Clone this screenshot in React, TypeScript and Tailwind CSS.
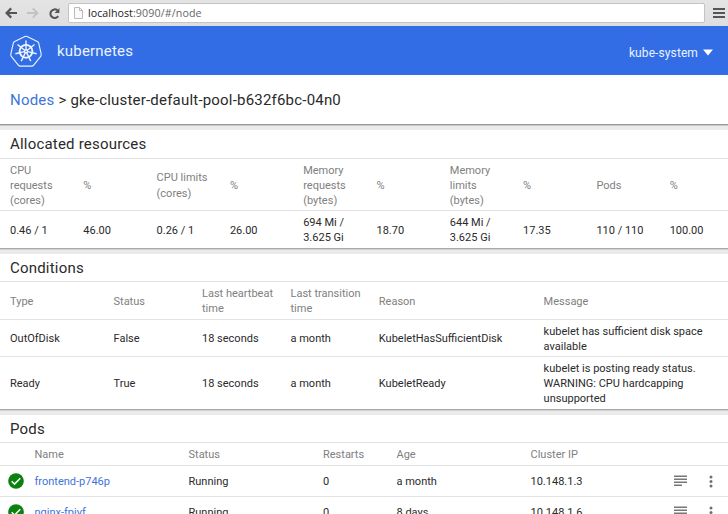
import React from 'react';

const resources = [
  { label: 'CPU requests (cores)', value: '0.46 / 1' },
  { label: '%', value: '46.00' },
  { label: 'CPU limits (cores)', value: '0.26 / 1' },
  { label: '%', value: '26.00' },
  { label: 'Memory requests (bytes)', value: '694 Mi / 3.625 Gi' },
  { label: '%', value: '18.70' },
  { label: 'Memory limits (bytes)', value: '644 Mi / 3.625 Gi' },
  { label: '%', value: '17.35' },
  { label: 'Pods', value: '110 / 110' },
  { label: '%', value: '100.00' },
];

const conditionHeads = ['Type', 'Status', 'Last heartbeat time', 'Last transition time', 'Reason', 'Message'];

const conditions = [
  ['OutOfDisk', 'False', '18 seconds', 'a month', 'KubeletHasSufficientDisk', 'kubelet has sufficient disk space available'],
  ['Ready', 'True', '18 seconds', 'a month', 'KubeletReady', 'kubelet is posting ready status. WARNING: CPU hardcapping unsupported'],
];

const pods = [
  { name: 'frontend-p746p', status: 'Running', restarts: 0, age: 'a month', ip: '10.148.1.3' },
  { name: 'nginx-fpivf', status: 'Running', restarts: 0, age: '8 days', ip: '10.148.1.6' },
];

const resourceGrid = 'grid grid-cols-[repeat(10,73.3px)] items-center pl-[10px]';
const conditionGrid = 'grid grid-cols-[103.5px_88.5px_88.5px_88.3px_164.8px_184.4px] items-center pt-[1.5px] pl-[10px]';
const podGrid = 'grid grid-cols-[34.5px_154px_134.5px_73.5px_134px_143px_1fr] items-center pt-[2px]';
const line = 'border-b border-[#e2e2e2]';

function BrowserBar() {
  return (
    <div className="flex h-[26px] items-center bg-gradient-to-b from-[#e4e4e4] to-[#dedede]">
      <svg className="ml-[5px] h-[12px] w-[13px]" viewBox="0 0 13 12" fill="none" stroke="#555" strokeWidth="2.2">
        <path d="M12 6H2M6.2 1.4 1.6 6l4.6 4.6" />
      </svg>
      <svg className="ml-[8px] h-[12px] w-[13px]" viewBox="0 0 13 12" fill="none" stroke="#c2c2c2" strokeWidth="2">
        <path d="M1 6h10M6.8 1.4 11.4 6l-4.6 4.6" />
      </svg>
      <svg className="ml-[9px] h-[13px] w-[13px]" viewBox="0 0 13 13">
        <path d="M10.2 9.2A4.3 4.3 0 1 1 9.4 3.3" fill="none" stroke="#555" strokeWidth="2" />
        <path d="M11.4 1v5H6.6z" fill="#555" />
      </svg>
      <div className="ml-[7px] flex h-[20px] w-[637px] items-center rounded-[2px] border border-[#c4c4c4] bg-white">
        <svg className="ml-[5px] h-[12px] w-[9px]" viewBox="0 0 9 12" fill="#fafafa" stroke="#bbb">
          <path d="M.5.5h5l3 3v8h-8zM5.5.5v3h3" />
        </svg>
        <span className="ml-[5px] pt-[2px] font-['Open_Sans',sans-serif] text-[10.7px] tracking-[0.1px] text-[#666]">
          <span className="tracking-[0.02px] text-[#222]">localhost</span>:9090/#/node
        </span>
      </div>
      <div className="ml-[8px] flex w-[12px] flex-col gap-[2px]">
        <i className="h-[2px] bg-[#555]" />
        <i className="h-[2px] bg-[#555]" />
        <i className="h-[2px] bg-[#555]" />
      </div>
    </div>
  );
}

function KubernetesLogo() {
  const angles = [0, 51.43, 102.86, 154.29, 205.71, 257.14, 308.57];
  return (
    <svg className="ml-[9px] h-[34px] w-[34px]" viewBox="0 0 34 34" fill="none" stroke="#eef5ff">
      <path d="M15.9 1.5Q17 1 18.1 1.5L28.3 6.4Q29.4 7 29.7 8.1L32.2 19.2Q32.4 20.4 31.7 21.3L24.7 30.1Q23.9 31.1 22.7 31.1H11.3Q10.1 31.1 9.3 30.1L2.3 21.3Q1.6 20.4 1.8 19.2L4.3 8.1Q4.6 7 5.7 6.4Z" strokeWidth="1.1" transform="translate(0 1)" />
      <circle cx="17" cy="17.3" r="6.4" strokeWidth="1.9" />
      <circle cx="17" cy="17.3" r="1.5" strokeWidth="1.4" />
      {angles.map((a) => (
        <path key={a} d="M17 15.6V6.4" strokeWidth="1.4" transform={`rotate(${a} 17 17.3)`} />
      ))}
    </svg>
  );
}

function Section({ title, first, children }: { title: string; first?: boolean; children: React.ReactNode }) {
  return (
    <section className="mt-[5px] border-b-[1.5px] border-[#aaa] bg-white shadow-[0_1px_0_#d2d2d2]">
      <h2 className={`flex items-center pt-[2px] pl-[10px] text-[15px] tracking-[0.2px] ${first ? 'h-[29px]' : 'h-[28px]'} ${line}`}>{title}</h2>
      {children}
    </section>
  );
}

export default function App() {
  return (
    <div className="h-[514px] w-[728px] overflow-hidden bg-[#ebebeb] font-[Roboto,sans-serif] text-[11px] leading-[15.2px] text-[#2a2a2a]">
      <BrowserBar />
      <header className="flex h-[49px] items-center bg-[#326de6] text-[#eaf3ff]">
        <KubernetesLogo />
        <span className="ml-[14px] pt-[2px] text-[15px] tracking-[0.2px]">kubernetes</span>
        <div className="mt-[5px] ml-auto mr-[15px] flex items-center gap-[5px] text-[12px] tracking-[0.1px]">
          <span className="pt-[2px]">kube-system</span>
          <svg className="h-[7px] w-[10px]" viewBox="0 0 10 7" fill="#fff"><path d="M0 .5h10L5 6.5z" /></svg>
        </div>
      </header>
      <div className="flex h-[50px] items-center gap-[4px] border-b border-[#999] bg-white pt-[2px] pl-[10px] text-[15px] tracking-[0.2px] shadow-[0_1px_0_#c8c8c8]">
        <a className="text-[#3d74d9]">Nodes</a>
        <span>&gt; gke-cluster-default-pool-b632f6bc-04n0</span>
      </div>

      <Section title="Allocated resources" first>
        <div className={`${resourceGrid} h-[52px] pt-[2.4px] text-[#808080] ${line}`}>
          {resources.map((r, i) => <span key={i} className="pr-[16px]">{r.label}</span>)}
        </div>
        <div className={`${resourceGrid} h-[37px] pt-[1.5px]`}>
          {resources.map((r, i) => <span key={i} className="pr-[16px]">{r.value}</span>)}
        </div>
      </Section>

      <Section title="Conditions">
        <div className={`${conditionGrid} h-[38px] text-[#808080] ${line}`}>
          {conditionHeads.map((h) => <span key={h} className="pr-[14px]">{h}</span>)}
        </div>
        <div className={`${conditionGrid} h-[37px] ${line}`}>
          {conditions[0].map((c, i) => <span key={i} className="pr-[14px]">{c}</span>)}
        </div>
        <div className={`${conditionGrid} h-[52px]`}>
          {conditions[1].map((c, i) => <span key={i} className="pr-[14px]">{c}</span>)}
        </div>
      </Section>

      <Section title="Pods">
        <div className={`${podGrid} h-[23px] text-[#808080] ${line}`}>
          <span />
          <span>Name</span>
          <span>Status</span>
          <span>Restarts</span>
          <span>Age</span>
          <span>Cluster IP</span>
        </div>
        {pods.map((p) => (
          <div key={p.name} className={`${podGrid} h-[31px] ${line}`}>
            <svg className="mb-[2px] ml-[8px] h-[16px] w-[16px]" viewBox="0 0 16 16">
              <circle cx="8" cy="8" r="7.8" fill="#0b8210" />
              <path d="m3.7 8.3 2.8 2.8 5.8-5.8" fill="none" stroke="#fff" strokeWidth="1.5" />
            </svg>
            <a className="text-[#3d74d9]">{p.name}</a>
            <span>{p.status}</span>
            <span>{p.restarts}</span>
            <span>{p.age}</span>
            <span>{p.ip}</span>
            <div className="mb-[2px] flex items-center">
              <svg className="h-[12px] w-[13px]" viewBox="0 0 13 12" fill="#777">
                <path d="M0 .5h13v1.6H0zM0 3.5h13v1.6H0zM0 6.5h13v1.6H0zM0 9.5h8v1.6H0z" />
              </svg>
              <svg className="ml-[22px] h-[13px] w-[4px]" viewBox="0 0 4 13" fill="#707070">
                <circle cx="2" cy="2" r="1.5" />
                <circle cx="2" cy="6.5" r="1.5" />
                <circle cx="2" cy="11" r="1.5" />
              </svg>
            </div>
          </div>
        ))}
      </Section>
    </div>
  );
}
